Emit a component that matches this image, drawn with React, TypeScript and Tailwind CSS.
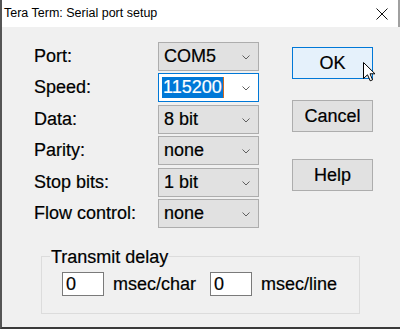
import React from "react";

const font = { fontFamily: '"Liberation Sans", Arial, sans-serif' };

function Chevron() {
  return (
    <svg width="8" height="5" viewBox="0 0 8 5" className="shrink-0">
      <path d="M0.5 0.5 L4 4 L7.5 0.5" fill="none" stroke="#5f5f5f" strokeWidth="1" />
    </svg>
  );
}

function Combo({ value }: { value: string }) {
  return (
    <div className="h-[29px] w-[101px] flex items-center justify-between border border-[#adadad] bg-[#e1e1e1] pl-[5px] pr-[8px] text-black">
      <span>{value}</span>
      <div className="mt-[2px]">
        <Chevron />
      </div>
    </div>
  );
}

function SpeedCombo() {
  return (
    <div className="h-[29px] w-[101px] flex items-center justify-between border border-[#0078d7] bg-white pl-[3px] pr-[8px]">
      <div className="flex items-center h-[21px]">
        <span className="bg-[#0078d7] text-white h-[21px] leading-[21px] px-[1px]">115200</span>
        <span className="w-[1px] h-[21px] bg-[#d46a1e]" />
      </div>
      <div className="mt-[2px]">
        <Chevron />
      </div>
    </div>
  );
}

function Btn({ label, primary }: { label: string; primary?: boolean }) {
  return (
    <div
      className={
        "w-[81px] h-[32px] flex items-center justify-center text-black " +
        (primary ? "bg-[#e5f1fb] border border-[#0078d7]" : "bg-[#e1e1e1] border border-[#adadad]")
      }
    >
      {label}
    </div>
  );
}

function Field({ value }: { value: string }) {
  return (
    <div className="w-[42px] h-[24px] flex items-center border border-[#7a7a7a] bg-white pl-[3px] text-black">
      {value}
    </div>
  );
}

export default function App() {
  const rows: [string, React.ReactNode][] = [
    ["Port:", <Combo value="COM5" />],
    ["Speed:", <SpeedCombo />],
    ["Data:", <Combo value="8 bit" />],
    ["Parity:", <Combo value="none" />],
    ["Stop bits:", <Combo value="1 bit" />],
    ["Flow control:", <Combo value="none" />],
  ];
  return (
    <div
      className="relative w-[400px] h-[329px] flex flex-col border-l-2 border-l-[#555555] border-b-2 border-b-[#3a3a3a] bg-[#f0f0f0] overflow-hidden"
      style={font}
    >
      {/* Title bar */}
      <div className="h-[27px] shrink-0 bg-white flex items-center justify-between pl-[2px] pr-[10px] border-r-2 border-r-[#a0a0a0]">
        <span className="text-[12.5px] text-black leading-none">Tera Term: Serial port setup</span>
        <svg width="12" height="12" viewBox="0 0 12 12">
          <path d="M0.5 0.5 L11.5 11.5 M11.5 0.5 L0.5 11.5" stroke="#111" strokeWidth="1" fill="none" />
        </svg>
      </div>

      {/* Body */}
      <div className="flex-1 pt-[15px] pl-[32px] text-[18px] [-webkit-text-stroke:0.2px_currentcolor]">
        <div className="flex">
          <div className="grid grid-cols-[124px_101px] gap-y-[2.4px]">
            {rows.map(([label, ctl], i) => (
              <React.Fragment key={i}>
                <div className="h-[29px] flex items-center text-black">{label}</div>
                {ctl}
              </React.Fragment>
            ))}
          </div>
          <div className="ml-[33px] mt-[5px] flex flex-col">
            <Btn label="OK" primary />
            <div className="mt-[21px]">
              <Btn label="Cancel" />
            </div>
            <div className="mt-[27px]">
              <Btn label="Help" />
            </div>
          </div>
        </div>

        <fieldset className="ml-[7px] mt-[19px] w-[319px] border border-[#dcdcdc] pl-[8px] pb-[15px]">
          <legend className="px-[1px] leading-[20px] text-black">Transmit delay</legend>
          <div className="mt-[4px] ml-[12px] flex items-center">
            <Field value="0" />
            <span className="ml-[9px] text-black">msec/char</span>
            <div className="ml-[14px]">
              <Field value="0" />
            </div>
            <span className="ml-[9px] text-black">msec/line</span>
          </div>
        </fieldset>
      </div>

      {/* Mouse cursor */}
      <svg
        className="absolute left-[361px] top-[62px]"
        width="13"
        height="20"
        viewBox="0 0 13 20"
      >
        <path
          d="M0.5 0.5 L0.5 16.5 L4.5 12.8 L7.2 18.8 L9.6 17.8 L7 11.8 L12 11.8 Z"
          fill="#ffffff"
          stroke="#000000"
          strokeWidth="1"
          strokeLinejoin="miter"
        />
      </svg>
    </div>
  );
}
